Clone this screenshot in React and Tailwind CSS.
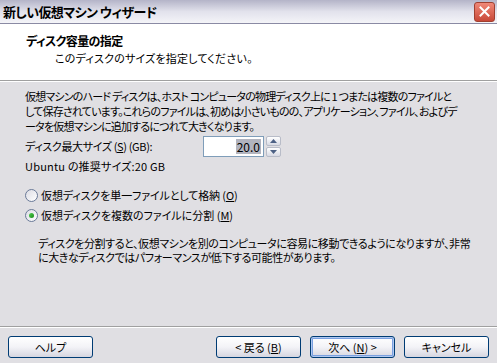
import React from "react";

const font = {
  fontFamily: '"Noto Sans CJK JP", "Liberation Sans", sans-serif',
  fontFeatureSettings: '"palt" 1',
};

const WizButton = ({ children, className = "", primary = false }) => (
  <button
    className={`h-[22px] w-[85px] rounded-[3px] border border-[#003c74] bg-gradient-to-b from-white via-[#f3f3f7] to-[#d6d6e0] text-[11px] leading-none tracking-[0px] text-black ${
      primary ? "shadow-[inset_0_0_0_1px_#b0c8f0,inset_0_0_0_2px_#7aa0e0]" : ""
    } ${className}`}
    style={font}
  >
    {children}
  </button>
);

const Radio = ({ checked }) => (
  <span className="relative mr-[3px] inline-block h-[13px] w-[13px] shrink-0 rounded-full border border-[#6a7a98] bg-gradient-to-br from-[#dcdce4] to-white">
    {checked && (
      <span className="absolute left-[3px] top-[3px] h-[5px] w-[5px] rounded-full bg-gradient-to-br from-[#4fd04f] to-[#1a8a1a]" />
    )}
  </span>
);

export default function App() {
  return (
    <div
      className="flex h-[363px] w-[497px] flex-col overflow-hidden bg-[#e0dfe3] text-[11px] tracking-[-0.8px] text-black"
      style={font}
    >
      {/* title bar */}
      <div className="flex h-[24px] items-center justify-between border-b border-[#8a8aa4] bg-gradient-to-b from-[#b4b4c8] via-[#e2e2ec] to-[#f4f4f8] pl-[3px] pr-[2px]">
        <span className="text-[13px] font-bold leading-none tracking-[-0.6px]">
          新しい仮想マシン ウィザード
        </span>
        <span className="flex h-[20px] w-[21px] items-center justify-center rounded-[3px] border border-[#a04030] bg-gradient-to-b from-[#f08878] to-[#c84838]">
          <svg width="11" height="11" viewBox="0 0 11 11">
            <path
              d="M1.5 1.5 L9.5 9.5 M9.5 1.5 L1.5 9.5"
              stroke="white"
              strokeWidth="2"
              strokeLinecap="square"
            />
          </svg>
        </span>
      </div>

      {/* header */}
      <div className="flex h-[57px] flex-col border-b border-[#a0a0a0] bg-white pl-[26px] pt-[9px]">
        <div className="text-[12px] font-bold leading-[15px] tracking-[-0.6px]">
          ディスク容量の指定
        </div>
        <div className="ml-[29px] mt-[3px] leading-[15px] tracking-[0.2px]">
          このディスクのサイズを指定してください。
        </div>
      </div>
      <div className="h-px bg-white" />

      {/* body */}
      <div className="flex flex-1 flex-col pl-[25px]">
        <div className="mt-[7px] whitespace-nowrap leading-[15px]">
          仮想マシンのハード ディスクは、ホスト コンピュータの物理ディスク上に 1 つまたは複数のファイルと
          <br />
          して保存されています。これらのファイルは、初めは小さいものの、アプリケーション、ファイル、およびデ
          <br />
          ータを仮想マシンに追加するにつれて大きくなります。
        </div>

        <div className="mt-[2px] flex h-[21px] items-center">
          <span className="w-[178px] tracking-[-0.35px]">
            ディスク最大サイズ (<span className="underline">S</span>) (GB):
          </span>
          <div className="flex h-[21px] w-[61px] items-center justify-end border border-[#7f9db9] bg-white pr-[2px] text-[12px] tracking-normal">
            <span className="bg-[#b2b4bf] px-px leading-[15px]">20.0</span>
          </div>
          <div className="ml-[2px] flex h-[21px] w-[15px] flex-col gap-px">
            <span className="flex flex-1 items-center justify-center rounded-[2px] border border-[#b8bcc8] bg-gradient-to-b from-white to-[#d8dae4]">
              <svg width="7" height="4" viewBox="0 0 7 4">
                <path d="M3.5 0 L7 4 L0 4 Z" fill="#4d6185" />
              </svg>
            </span>
            <span className="flex flex-1 items-center justify-center rounded-[2px] border border-[#b8bcc8] bg-gradient-to-b from-white to-[#d8dae4]">
              <svg width="7" height="4" viewBox="0 0 7 4">
                <path d="M0 0 L7 0 L3.5 4 Z" fill="#4d6185" />
              </svg>
            </span>
          </div>
        </div>

        <div className="mt-[2px] leading-[15px] tracking-[0.2px]">
          Ubuntu の推奨サイズ:20 GB
        </div>

        <div className="mt-[11px] flex h-[20px] items-center tracking-[-0.1px]">
          <Radio />
          <span>
            仮想ディスクを単一ファイルとして格納 (<span className="underline">O</span>)
          </span>
        </div>
        <div className="flex h-[21px] items-center tracking-[0px]">
          <Radio checked />
          <span>
            仮想ディスクを複数のファイルに分割 (<span className="underline">M</span>)
          </span>
        </div>

        <div className="ml-[13px] mt-[10px] whitespace-nowrap leading-[14px] tracking-[-0.4px]">
          ディスクを分割すると、仮想マシンを別のコンピュータに容易に移動できるようになりますが、非常
          <br />
          に大きなディスクではパフォーマンスが低下する可能性があります。
        </div>
      </div>

      {/* footer */}
      <div className="h-px bg-[#a0a0a0]" />
      <div className="h-px bg-white" />
      <div className="flex h-[35px] items-start pl-[8px] pt-[8px]">
        <WizButton>ヘルプ</WizButton>
        <WizButton className="ml-[123px]">&lt; 戻る (<span className="underline">B</span>)</WizButton>
        <WizButton className="ml-[9px]" primary>
          次へ (<span className="underline">N</span>) &gt;
        </WizButton>
        <WizButton className="ml-[9px]">キャンセル</WizButton>
      </div>
    </div>
  );
}
